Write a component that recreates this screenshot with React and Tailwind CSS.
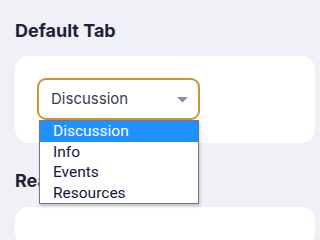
import React from "react";

const options = ["Discussion", "Info", "Events", "Resources"];

export default function App() {
  return (
    <div className="h-screen w-full overflow-hidden bg-[#f0f1f7] pl-[15px] pt-[19px] font-['Inter',sans-serif]">
      <h2 className="text-[18px] leading-[24px] font-bold text-[#1e2133]">Default Tab</h2>

      <div className="relative mt-[13px] w-[300px] rounded-[14px] bg-white px-[22px] pt-[22px] pb-[23px]">
        <div className="flex h-[42px] w-[163px] items-center justify-between rounded-[9px] border-2 border-[#c8953a] pl-[12px] pr-[10px]">
          <span className="text-[15px] text-[#3a3b4d]">Discussion</span>
          <svg width="11" height="6" viewBox="0 0 11 6" className="mt-[2px]">
            <path d="M0 0H11L5.5 5.5Z" fill="#8b8ca6" />
          </svg>
        </div>

        {/* native-looking options popup */}
        <ul className="absolute left-[24px] top-[64px] z-10 w-[160px] border border-[#767676] bg-white font-['Roboto',sans-serif] text-[15.5px] leading-[20.5px] text-[#15173a] shadow-[1px_2px_3px_rgba(0,0,0,0.2)]">
          {options.map((o, i) => (
            <li
              key={o}
              className={`pl-[13px] ${i === 0 ? "bg-[#1e90ff] text-white" : ""}`}
            >
              {o}
            </li>
          ))}
        </ul>
      </div>

      <h2 className="mt-[26px] text-[18px] leading-[24px] font-bold text-[#1e2133]">Reading</h2>
      <div className="mt-[14px] h-[40px] w-[300px] rounded-[14px] bg-white" />
    </div>
  );
}
